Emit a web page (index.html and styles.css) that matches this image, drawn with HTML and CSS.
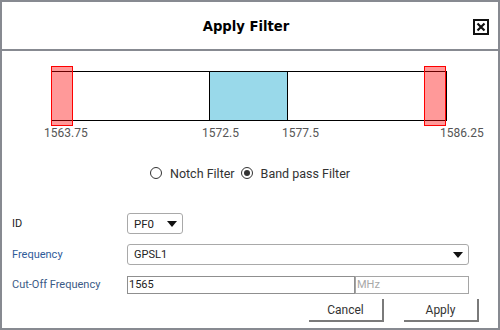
FILE: index.html
```html
<!doctype html>
<html lang="en">
<head>
  <meta charset="UTF-8">
  <title>Apply Filter</title>
  <link rel="stylesheet" href="styles.css">
</head>
<body>
  <div class="dialog">
    <div class="dialog-head">
      <div class="dialog-title">Apply Filter</div>
      <button class="close-btn" title="Close">
        <svg width="12" height="12" viewBox="0 0 12 12"><path d="M2.5 2.5 L9.5 9.5 M9.5 2.5 L2.5 9.5" stroke="#111" stroke-width="2.2" fill="none"/></svg>
      </button>
    </div>
    <div class="dialog-body">
      <!-- frequency scale -->
      <div class="scale">
        <div class="band"></div>
        <div class="pass"></div>
        <div class="edge edge-lo"></div>
        <div class="edge edge-hi"></div>
        <span class="tick tick-1">1563.75</span>
        <span class="tick tick-2">1572.5</span>
        <span class="tick tick-3">1577.5</span>
        <span class="tick tick-4">1586.25</span>
      </div>

      <div class="filter-type">
        <label class="radio"><span class="dot"></span>Notch Filter</label>
        <label class="radio checked"><span class="dot"></span>Band pass Filter</label>
      </div>

      <div class="form">
        <span class="lbl lbl-id">ID</span>
        <div class="select select-id">PF0<i class="caret"></i></div>

        <span class="lbl">Frequency</span>
        <div class="select select-freq">GPSL1<i class="caret"></i></div>

        <span class="lbl lbl-cut">Cut-Off Frequency</span>
        <div class="cut">
          <input class="field field-val" type="text" value="1565">
          <input class="field field-unit" type="text" placeholder="MHz">
        </div>
      </div>

      <div class="actions">
        <button class="btn">Cancel</button>
        <button class="btn">Apply</button>
      </div>
    </div>
  </div>
</body>
</html>
```

FILE: styles.css
```css
html,body{margin:0;padding:0;background:#fff;}
body{font-family:Roboto,"Liberation Sans",sans-serif;color:#333;}

.dialog{width:500px;height:330px;box-sizing:border-box;border:2px solid #878a91;background:#fff;display:flex;flex-direction:column;}

/* header */
.dialog-head{height:49px;box-sizing:border-box;border-bottom:2px solid #878a91;display:flex;align-items:center;padding-top:2px;}
.dialog-title{flex:1;text-align:center;padding-left:17px;font-family:"DejaVu Sans",Verdana,sans-serif;font-weight:bold;font-size:13.2px;color:#000;}
.close-btn{width:16px;height:16px;margin:0 9px 0 0;padding:0;box-sizing:border-box;border:2px solid #111;background:#fff;display:flex;align-items:center;justify-content:center;cursor:pointer;}
.close-btn svg{display:block;}

.dialog-body{flex:1;display:flex;flex-direction:column;}

/* scale diagram */
.scale{position:relative;height:76px;margin-top:15px;}
.band{position:absolute;left:49px;top:5px;width:396px;height:50px;box-sizing:border-box;border:1px solid #000;}
.pass{position:absolute;left:207px;top:5px;width:79px;height:50px;box-sizing:border-box;border:1px solid #000;background:#99d9ea;}
.edge{position:absolute;top:0;width:22px;height:60px;box-sizing:border-box;border:1px solid #f00;background:rgba(255,0,0,.4);}
.edge-lo{left:49px;}
.edge-hi{left:422px;}
.tick{position:absolute;top:60px;font-size:12px;color:#555;white-space:nowrap;}
.tick-1{left:42px;}
.tick-2{left:200px;}
.tick-3{left:280px;}
.tick-4{left:438px;}

/* radios */
.filter-type{display:flex;justify-content:center;align-items:center;gap:6px;height:16px;margin-top:23px;font-size:12.5px;color:#333;}
.radio{display:flex;align-items:center;gap:8px;cursor:pointer;}
.radio .dot{width:12px;height:12px;box-sizing:border-box;border:1px solid #333;border-radius:50%;display:flex;align-items:center;justify-content:center;}
.radio.checked .dot::after{content:"";width:6px;height:6px;border-radius:50%;background:#333;}

/* form */
.form{display:grid;grid-template-columns:115px 1fr;grid-template-rows:21px 21px 18px;row-gap:10px;align-items:center;margin-top:32px;padding:0 30px 0 10px;font-size:11px;}
.lbl{color:#2f5b9a;}
.lbl-id{color:#222;}
.lbl-cut{margin-top:1px;color:#3b5a86;}
.select{height:21px;box-sizing:border-box;border:1px solid #a9a9a9;border-radius:3px;display:flex;align-items:center;justify-content:space-between;padding:0 5px 0 6px;color:#222;}
.select-id{width:56px;font-size:11.5px;}
.select-freq{width:342px;}
.caret{width:0;height:0;border-left:5px solid transparent;border-right:5px solid transparent;border-top:6px solid #111;}
.cut{display:flex;margin-top:1px;}
.field{height:18px;box-sizing:border-box;border:1px solid #8f8f8f;margin:0;padding:0 1px;font-family:inherit;font-size:11px;color:#222;outline:none;}
.field-val{width:228px;}
.field-unit{width:114px;border-color:#a5a5a5;}
.field::placeholder{color:#a8a8a8;}

/* buttons */
.actions{display:flex;justify-content:flex-end;gap:20px;margin-top:6px;padding-right:19px;}
.btn{width:75px;height:23px;box-sizing:border-box;background:#fff;border:none;border-right:2px solid #7a7a7a;border-bottom:2px solid #7a7a7a;font-family:inherit;font-size:12px;color:#333;padding:0;cursor:pointer;}
```
